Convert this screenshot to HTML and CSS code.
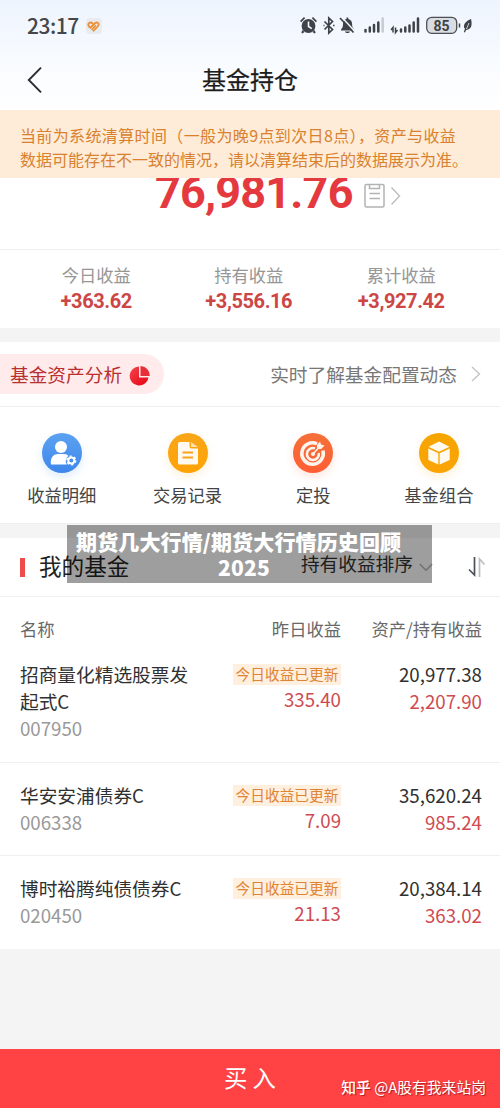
FILE: index.html
```html
<!DOCTYPE html>
<html lang="zh-CN">
<head>
<meta charset="utf-8">
<title>基金持仓</title>
<link rel="stylesheet" href="styles.css">
</head>
<body>
<div class="screen">
  <header class="top">
    <div class="status">
      <span class="time">23:17</span>
      <span class="app"><svg width="13" height="11" viewBox="0 0 13 11" fill="none" stroke="#e9933f" stroke-linecap="round"><path d="M2.200 5.800C.3 3.500 2 1.200 4 1.600c1 .2 1.600 1 1.600 1" stroke-width="2"/><path d="M3.300 6.800L8 2.300c2-1.800 4.300-.3 3.400 1.700" stroke-width="1.900"/><path d="M5 8.300l3.500-3.400M6.500 9.800l4.700-4.800" stroke-width="1.700"/></svg></span>
      <svg class="sys" width="174" height="20" viewBox="0 0 174 20">
        <g fill="#3f4246">
          <circle cx="8.500" cy="10" r="6.900"/>
          <path d="M0 5l4-4 1.200 1.200-4 4zM17 5l-4-4-1.200 1.200 4 4zM2.500 14l2 2-2 1.500-1.200-1zM14.500 14l-2 2 2 1.500 1.200-1z"/>
          <path d="M41 13.500c1.500-1.500 2-3 2-5.500 0-3 1.500-4.500 3.500-5V1.500h1.800V3c2.500.5 3.800 2.500 3.800 5 0 2.500.5 4 2 5.500v1H41zM45 15.500h5c-.5 2-4.500 2-5 0z"/>
        </g>
        <path d="M8.500 5.500v5l3.300 2.200" fill="none" stroke="#f5f8fe" stroke-width="1.600"/>
        <path d="M24.500 5.500l8 8-3.700 3.500V2l3.700 3.500-8 8M23.500 9.500h1M33 9.500h1.500" fill="none" stroke="#3f4246" stroke-width="1.700"/>
        <path d="M41.500 1l13 14" stroke="#f5f8fe" stroke-width="1.600"/>
        <path d="M40 2l13.500 14.500" stroke="#3f4246" stroke-width="1.700"/>
        <g stroke="#3f4246" stroke-width="2.500" stroke-linecap="round">
          <path d="M65.500 14v1.500M69.800 11.500v4M74 9v6.500M78.300 6.500v9M101 13.500v2M105.300 11.500v4M109.500 9.500v6M113.700 6.500v9M118 2.500v13"/>
          <path d="M82.700 2.500v13" stroke="#c6cbd4"/>
        </g>
        <path d="M93 16.500v-5l-2 2.500M95.500 11.500v5l2-2.500" fill="none" stroke="#3f4246" stroke-width="1.500"/>
        <rect x="126.700" y="1.300" width="30" height="16" rx="5" fill="#d9dce1" stroke="#4c4f54" stroke-width="1.300"/>
        <text class="battery" x="141.500" y="14.500" text-anchor="middle">85</text>
        <path d="M159.500 7.500v4" stroke="#3f4246" stroke-width="1.500"/>
        <path d="M171 3c-4.500 2-7.500 4.500-7 8.500l1 1.200-1.200 3.300 1 .4 1.400-2.400c5.500-.5 6.200-5.500 4.800-11z" fill="#3f4246"/>
        <path d="M169 7l-2.500 6" stroke="#f5f8fe" stroke-width=".8"/>
      </svg>
    </div>
    <nav class="nav">
      <svg class="back" width="16" height="26" viewBox="0 0 16 26" fill="none" stroke="#2b2c2f" stroke-width="1.900"><path d="M14 .7L1.800 13 14 25.300"/></svg>
      <h1 class="title">基金持仓</h1>
    </nav>
  </header>
  <div class="notice"><p class="wide">当前为系统清算时间（一般为晚9点到次日8点），资产与收益</p><p>数据可能存在不一致的情况，请以清算结束后的数据展示为准。</p></div>
  <section class="total">
    <span class="amount">76,981.76</span>
    <svg class="bill" width="38" height="26" viewBox="0 0 38 26" fill="none" stroke="#b3b3b3" stroke-width="1.500"><rect x="1" y="1.500" width="19" height="22.500" rx="1.500"/><path d="M5.500 1.500v4h10v-4M5.500 10.500h10.500M5.500 15.500h10.500"/><path d="M27.500 4.500l8 8.500-8 8.500" stroke="#c0c0c0"/></svg>
  </section>
  <section class="stats">
    <div class="stat"><span>今日收益</span><b>+363.62</b></div>
    <div class="stat"><span>持有收益</span><b>+3,556.16</b></div>
    <div class="stat"><span>累计收益</span><b>+3,927.42</b></div>
  </section>
  <section class="analysis">
    <div class="pill"><span>基金资产分析</span>
      <svg width="22" height="22" viewBox="0 0 22 22"><defs><linearGradient id="pie" x1="0" y1="0" x2="1" y2="1"><stop offset="0" stop-color="#f4464c"/><stop offset="1" stop-color="#e60012"/></linearGradient></defs><path d="M10 1.500V12.500h9.500A9.500 9.500 0 1 1 10 1.500z" fill="url(#pie)"/><path d="M11.500 1a9.500 9.500 0 0 1 9.300 10h-9.300z" fill="#e8303a"/></svg>
    </div>
    <div class="guide"><span>实时了解基金配置动态</span><svg width="10" height="16" viewBox="0 0 10 16" fill="none" stroke="#c4c4c4" stroke-width="1.400"><path d="M1 1l7.500 7L1 15"/></svg></div>
  </section>
  <section class="actions">
    <div class="action"><i class="disc blue"><svg width="40" height="40" viewBox="0 0 40 40" fill="#fff"><circle cx="19" cy="14" r="6"/><path d="M9 31.500c-1-6 2-10.500 7-10.500h6c2 0 3.500.8 4.500 2-3 2-3.500 6-1.500 8.500z"/><circle cx="29.300" cy="27.500" r="3" fill="none" stroke="#fff" stroke-width="2"/><circle cx="29.300" cy="27.500" r="4.400" fill="none" stroke="#fff" stroke-width="1.400" stroke-dasharray="2.300 2.300"/></svg></i><span>收益明细</span></div>
    <div class="action"><i class="disc amber"><svg width="40" height="40" viewBox="0 0 40 40"><path d="M12 9h9.500v4.500q0 2 2 2H30V30q0 1.500-1.500 1.500h-17Q10 31.500 10 30V11q0-2 2-2z" fill="#fffaf0"/><path d="M23 9l7 5h-7z" fill="#ffe3ad"/><path d="M14.500 19.500h10.500M14.500 24.500h10.500" stroke="#f7a41c" stroke-width="1.800"/></svg></i><span>交易记录</span></div>
    <div class="action"><i class="disc orange"><svg width="40" height="40" viewBox="0 0 40 40" fill="none" stroke="#fff4ed"><path d="M24 10.800A10.700 10.700 0 1 0 29.800 17.500" stroke-width="3.600"/><path d="M22 15.400A6 6 0 1 0 25.800 20" stroke-width="2.600"/><circle cx="20" cy="21" r="2" fill="#fff4ed" stroke="none"/><path d="M20 21l5-5.500" stroke-width="1.600"/><path d="M24 16v-4l3-3.500 1 3 3.500 1-3.300 3.500z" fill="#fff4ed" stroke="none"/></svg></i><span>定投</span></div>
    <div class="action"><i class="disc gold"><svg width="40" height="40" viewBox="0 0 40 40" fill="#fffaf0"><path d="M20 8.500l10.500 5.300L20 18.700 9.500 13.800z"/><path d="M9.300 15.500l10 4.700v11.300L9.300 27zM30.700 15.500l-10 4.700v11.300l10-4.500z"/></svg></i><span>基金组合</span></div>
  </section>
  <section class="funds">
    <div class="funds-head">
      <i class="mark"></i><h2>我的基金</h2>
      <span class="sort">持有收益排序</span>
      <svg class="down" width="14" height="9" viewBox="0 0 14 9" fill="none" stroke="#b5b5b5" stroke-width="1.400"><path d="M.7 1L7 7.300 13.300 1"/></svg>
      <svg class="swap" width="18" height="22" viewBox="0 0 18 22" fill="none" stroke-width="1.700"><path d="M6.500 1v18L1 13.500" stroke="#4b5059"/><path d="M11.500 21V3l5 5.500" stroke="#bdbdbd"/></svg>
      <div class="caption"><p class="line-a">期货几大行情/期货大行情历史回顾</p><p class="line-b">2025</p></div>
    </div>
    <div class="cols"><span>名称</span><span>昨日收益</span><span>资产/持有收益</span></div>
    <div class="row first">
      <div class="name"><p>招商量化精选股票发</p><p>起式C</p><p class="code">007950</p></div>
      <div class="day"><em>今日收益已更新</em><p>335.40</p></div>
      <div class="asset"><p>20,977.38</p><p class="red">2,207.90</p></div>
    </div>
    <div class="row">
      <div class="name"><p>华安安浦债券C</p><p class="code">006338</p></div>
      <div class="day"><em>今日收益已更新</em><p>7.09</p></div>
      <div class="asset"><p>35,620.24</p><p class="red">985.24</p></div>
    </div>
    <div class="row">
      <div class="name"><p>博时裕腾纯债债券C</p><p class="code">020450</p></div>
      <div class="day"><em>今日收益已更新</em><p>21.13</p></div>
      <div class="asset"><p>20,384.14</p><p class="red">363.02</p></div>
    </div>
  </section>
  <footer class="buy"><span class="buy-text">买 入</span><span class="credit"><b>知乎</b> @A股有我来站岗</span></footer>
</div>
</body>
</html>
```
FILE: styles.css
```css
* { box-sizing: border-box; margin: 0; padding: 0; }
body { width: 500px; background: #f4f4f4; font-family: "Noto Sans CJK SC", sans-serif; color: #303030; }
p, span, h1, h2, b, em { white-space: nowrap; }
svg { display: block; flex: none; }
.screen { width: 500px; height: 1108px; display: flex; flex-direction: column; overflow: hidden; }
.screen > * { flex: none; }

.top { height: 110px; background: linear-gradient(#eef4fe, #f8fbff 55%, #fff); }
.status { height: 52px; padding: 0 26px 0 27px; display: flex; align-items: center; }
.time { font-size: 21px; line-height: 50px; padding-bottom: 2px; color: #45474a; font-weight: 500; letter-spacing: -.5px; }
.app { width: 16px; height: 16px; margin-left: 7px; border-radius: 4px; background: #e9ebef; display: grid; place-items: center; }
.sys { margin-left: auto; }
.battery { font: 700 14px Roboto, sans-serif; fill: #3f4246; }
.nav { height: 56px; display: grid; grid-template-columns: 500px; align-items: center; }
.back { grid-area: 1 / 1; margin-left: 27px; }
.title { grid-area: 1 / 1; text-align: center; font-size: 24px; font-weight: 400; color: #1c1c1c; line-height: 54px; padding-bottom: 2px; -webkit-text-stroke: .25px #1c1c1c; }

.notice { height: 68px; padding: 13px 20px 0; background: #feecd8; color: #d9812e; font-size: 16px; line-height: 24px; position: relative; }
.wide { letter-spacing: .37px; }
.total { height: 72px; border-bottom: 1px solid #eee; display: flex; align-items: flex-start; padding-left: 155px; }
.amount { width: 198px; margin-top: -13px; font: 700 45px/56px Roboto, sans-serif; color: #e53940; letter-spacing: -.8px; }
.bill { margin: 5px 0 0 11px; }

.stats { height: 78px; padding: 12px 20px 0; display: grid; grid-template-columns: repeat(3, 152.500px); }
.stat { display: flex; flex-direction: column; align-items: center; font-size: 17.300px; line-height: 26px; color: #969696; }
.stat b { font: 700 20px/26px Roboto, sans-serif; color: #cc4646; letter-spacing: -.4px; padding-bottom: 1px; }

.analysis { height: 79px; border-top: 14px solid #f4f4f4; border-bottom: 1px solid #eee; background: #fff; display: flex; justify-content: space-between; align-items: center; padding-right: 19px; }
.pill { width: 164px; height: 40px; padding-left: 10px; display: flex; align-items: center; gap: 7px; border-radius: 0 20px 20px 0; background: #ffebeb; color: #b92f30; font-size: 18.700px; }
.pill span, .guide span { padding-bottom: 2px; }
.pill svg { margin-top: 3px; }
.guide { display: flex; align-items: center; gap: 14px; font-size: 18.700px; color: #777; }
.total, .stats, .actions, .funds { background: #fff; }

.actions { height: 117px; padding-top: 26px; border-bottom: 1px solid #eee; display: grid; grid-template-columns: repeat(4, 125.700px); margin-left: -1px; padding-left: 0; width: 501px; }
.action { display: flex; flex-direction: column; align-items: center; font-size: 17.300px; line-height: 26px; color: #444; gap: 9px; }
.disc { width: 40px; height: 40px; border-radius: 50%; }
.blue { background: linear-gradient(#5ba2f1, #3f86ec); box-shadow: 0 4px 9px #3f90f02b; }
.amber { background: linear-gradient(#f8a619, #ffa304); box-shadow: 0 4px 9px #ffab1b2b; }
.orange { background: linear-gradient(#f47038, #ff5e34); box-shadow: 0 4px 9px #ff6b3b2b; }
.gold { background: linear-gradient(#f5a500, #fba406); box-shadow: 0 4px 9px #ffb01b2b; }

.funds { border-top: 14px solid #f4f4f4; }
.funds-head { height: 59px; padding: 0 14px 0 20px; border-bottom: 1px solid #f0f0f0; display: flex; align-items: center; position: relative; }
.mark { width: 5px; height: 19px; background: #ef4b4c; }
.funds-head h2 { margin-left: 14px; font-size: 22.600px; line-height: 56px; padding-bottom: 2px; font-weight: 400; color: #222; }
.sort { margin-left: auto; font-size: 18.700px; line-height: 50px; padding-bottom: 8px; color: #333; }
.down { margin-left: 6px; }
.swap { margin-left: 35px; }
.caption { position: absolute; left: 67px; top: -13px; width: 365px; height: 58px; padding-top: 3px; background: rgba(0, 0, 0, .38); color: #fff; font-weight: 900; font-size: 21px; line-height: 26px; }
.line-a { padding-left: 9px; letter-spacing: .13px; }
.line-b { padding-left: 151px; letter-spacing: .2px; }
.cols { height: 45px; padding: 0 18px 0 20px; display: grid; grid-template-columns: 200px 121px 1fr; font-size: 17.300px; line-height: 63px; color: #686868; }
.cols span + span { text-align: right; }
.row { padding: 18px 18px 20px 20px; display: grid; grid-template-columns: 200px 121px 1fr; font-size: 18.700px; line-height: 27px; border-bottom: 1px solid #f0f0f0; }
.first { padding-bottom: 21px; }
.row:last-child { border-bottom: 0; padding-bottom: 21px; }
.code { color: #999; }
.day { display: flex; flex-direction: column; align-items: flex-end; color: #cf4b51; }
.day em { width: 108px; height: 21px; margin-top: 4px; font-style: normal; font-size: 14.700px; line-height: 20px; text-align: center; color: #df8432; background: #ffefdf; }
.asset { text-align: right; }
.red { color: #cf4b51; }

.buy { height: 59px; margin-top: auto; background: #ff4244; color: #fff; position: relative; display: grid; grid-template-columns: 500px; align-items: center; }
.buy-text { grid-area: 1 / 1; text-align: center; font-size: 23.400px; line-height: 57px; padding-bottom: 2px; }
.credit { grid-area: 1 / 1; justify-self: end; padding: 15px 14px 0 0; font-size: 14.800px; text-shadow: 1px 1px 1px rgba(90, 0, 0, .5); }
.credit b { font-weight: 500; }
```
